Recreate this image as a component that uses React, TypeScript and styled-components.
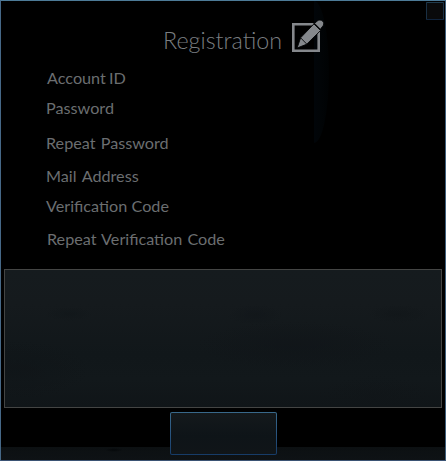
import React from 'react';
import styled, { createGlobalStyle } from 'styled-components';

const GlobalStyle = createGlobalStyle`
  * { box-sizing: border-box; }
  html, body { margin: 0; background: #000; overflow: hidden; }
`;

const Window = styled.main`
  position: relative;
  display: flex;
  flex-direction: column;
  width: 446px;
  height: 461px;
  border: 1px solid;
  border-color: #4d7b98 #405f7b #3b5374 #466887;
  background: #000;
  font-family: Lato, Carlito, sans-serif;
  color: #6b6e70;
`;

const Glow = styled.div`
  position: absolute;
  left: 313px;
  top: 0;
  width: 15px;
  height: 142px;
  border-radius: 0 100% 100% 0 / 0 50% 50% 0;
  background: linear-gradient(90deg, #010509, #010406 50%, #000203);
`;

const CloseButton = styled.button`
  position: absolute;
  top: 1px;
  right: 1px;
  width: 18px;
  height: 18px;
  padding: 0;
  border: 1px solid;
  border-color: #203c4e #192f43 #10243d #192f43;
  border-radius: 1px;
  background: #090a0b;
`;

const Header = styled.header`
  position: relative;
  display: flex;
  align-items: flex-start;
  height: 62px;
  padding: 18px 0 0 162px;
`;

const Title = styled.h1`
  width: 129px;
  margin: 8px 0 0;
  font-size: 23.3px;
  line-height: 26px;
  font-weight: 300;
  color: #7a7e81;
  white-space: nowrap;
`;

const Fields = styled.div`
  display: flex;
  flex-direction: column;
  height: 206px;
`;

const Label = styled.label<{ $height: number; $left: number; $gap: number }>`
  flex: none;
  height: ${(p) => p.$height}px;
  padding: 4px 0 0 ${(p) => p.$left}px;
  font-size: 16.2px;
  line-height: 22px;
  word-spacing: ${(p) => p.$gap}px;
  white-space: nowrap;
`;

const Notice = styled.section`
  flex: none;
  width: 438px;
  height: 139px;
  margin: 0 3px;
  border: 1px solid #444544;
  background:
    radial-gradient(ellipse 24px 7px at 64px 44px, #10161999, transparent),
    radial-gradient(ellipse 28px 10px at 250px 45px, #10151999, transparent),
    radial-gradient(ellipse 30px 9px at 393px 44px, #10151899, transparent),
    radial-gradient(ellipse 75px 30px at 10px 100px, #0f141799, transparent),
    radial-gradient(ellipse 100px 24px at 290px 75px, #10141899, transparent),
    radial-gradient(ellipse 60px 25px at 370px 130px, #10151899, transparent),
    linear-gradient(#151b1e 0%, #151a1d 25%, #11171a 62%, #12181b 80%, #101518);
`;

const Footer = styled.footer`
  display: flex;
  flex: 1;
  justify-content: center;
  padding: 4px 0 0 1px;
  background:
    radial-gradient(ellipse 9px 2px at 113px 42px, #05080a, transparent),
    linear-gradient(transparent 39px, #0c1012 39px, #0e1215);
`;

const SubmitButton = styled.button`
  width: 107px;
  height: 43px;
  padding: 0;
  border: 1px solid transparent;
  border-radius: 2px;
  background:
    linear-gradient(#14191c, #0e1418 55%, #101518) padding-box,
    linear-gradient(#39698b, #295580 50%, #163b67) border-box;
`;

const fields = [
  { text: 'Account ID', height: 30, left: 46, gap: -1 },
  { text: 'Password', height: 35, left: 45, gap: 0 },
  { text: 'Repeat Password', height: 33, left: 45, gap: 1 },
  { text: 'Mail Address', height: 30, left: 45, gap: 1.5 },
  { text: 'Verification Code', height: 33, left: 45, gap: 0.2 },
  { text: 'Repeat Verification Code', height: 33, left: 46, gap: 1 },
];

function EditIcon() {
  return (
    <svg width="34" height="34" viewBox="0 0 34 34" aria-hidden="true">
      <path d="M21.5 5.3H1.3v26.4h25.4V12.5" fill="none" stroke="#85888c" strokeWidth="2.6" />
      <g stroke="#020305" strokeWidth="0.9" fill="#85888c">
        <path d="M21.9 4.9 28.6 11.5 14.6 25.3 5.1 29 8.6 18.8Z" />
        <path d="M8.8 19 14.7 25" fill="none" />
        <path d="m22.5 4.3 2.7-2.2c1.6-1.6 3.9-1.4 5.4 0 1.6 1.6 1.5 4-.2 5.5l-2 2.7Z" />
      </g>
    </svg>
  );
}

export default function App() {
  return (
    <>
      <GlobalStyle />
      <Window>
        <Glow />
        <Header>
          <Title>Registration</Title>
          <EditIcon />
        </Header>
        <Fields>
          {fields.map((field) => (
            <Label key={field.text} $height={field.height} $left={field.left} $gap={field.gap}>
              {field.text}
            </Label>
          ))}
        </Fields>
        <Notice />
        <Footer>
          <SubmitButton aria-label="Submit" />
        </Footer>
        <CloseButton aria-label="Close" />
      </Window>
    </>
  );
}
